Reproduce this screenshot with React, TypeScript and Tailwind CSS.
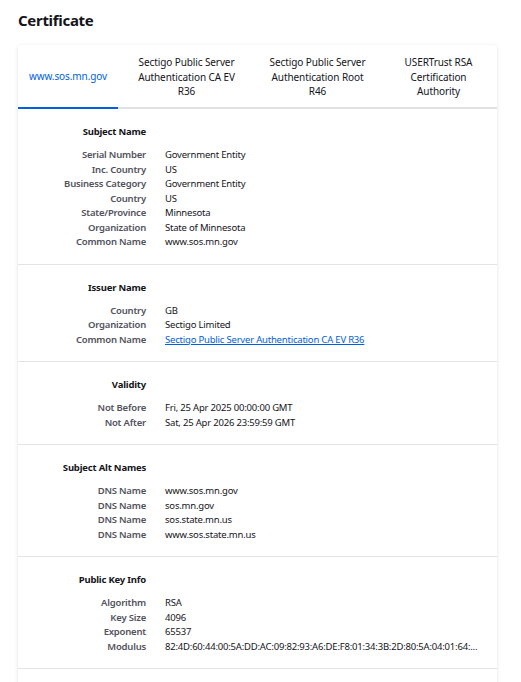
import React from 'react';

type Row = { label: string; value: string; link?: boolean };
type Section = { title: string; rows: Row[] };

const tabs = [
  { name: 'www.sos.mn.gov', width: 'w-[100px]' },
  { name: 'Sectigo Public Server Authentication CA EV R36', width: 'w-[137px]' },
  { name: 'Sectigo Public Server Authentication Root R46', width: 'w-[125px]' },
  { name: 'USERTrust RSA Certification Authority', width: 'flex-1' },
];

const sections: Section[] = [
  {
    title: 'Subject Name',
    rows: [
      { label: 'Serial Number', value: 'Government Entity' },
      { label: 'Inc. Country', value: 'US' },
      { label: 'Business Category', value: 'Government Entity' },
      { label: 'Country', value: 'US' },
      { label: 'State/Province', value: 'Minnesota' },
      { label: 'Organization', value: 'State of Minnesota' },
      { label: 'Common Name', value: 'www.sos.mn.gov' },
    ],
  },
  {
    title: 'Issuer Name',
    rows: [
      { label: 'Country', value: 'GB' },
      { label: 'Organization', value: 'Sectigo Limited' },
      { label: 'Common Name', value: 'Sectigo Public Server Authentication CA EV R36', link: true },
    ],
  },
  {
    title: 'Validity',
    rows: [
      { label: 'Not Before', value: 'Fri, 25 Apr 2025 00:00:00 GMT' },
      { label: 'Not After', value: 'Sat, 25 Apr 2026 23:59:59 GMT' },
    ],
  },
  {
    title: 'Subject Alt Names',
    rows: [
      { label: 'DNS Name', value: 'www.sos.mn.gov' },
      { label: 'DNS Name', value: 'sos.mn.gov' },
      { label: 'DNS Name', value: 'sos.state.mn.us' },
      { label: 'DNS Name', value: 'www.sos.state.mn.us' },
    ],
  },
  {
    title: 'Public Key Info',
    rows: [
      { label: 'Algorithm', value: 'RSA' },
      { label: 'Key Size', value: '4096' },
      { label: 'Exponent', value: '65537' },
      { label: 'Modulus', value: '82:4D:60:44:00:5A:DD:AC:09:82:93:A6:DE:F8:01:34:3B:2D:80:5A:04:01:64:...' },
    ],
  },
];

function CertSection({ section }: { section: Section }) {
  return (
    <div className="border-b border-[#e4e4e8] pt-[16px] pb-[14px]">
      <div className="flex">
        <div className="w-[128px] shrink-0 text-right text-[9.5px] leading-[14px] font-bold tracking-[-0.2px] text-[#15141a]">
          {section.title}
        </div>
      </div>
      <div className="mt-[9px] flex flex-col">
        {section.rows.map((row, i) => (
          <div key={i} className="flex text-[9.5px] leading-[14.5px] tracking-[-0.2px]">
            <div className="w-[128px] shrink-0 text-right font-semibold text-[#52525c]">{row.label}</div>
            <div className="ml-[19px] min-w-0 pr-[20px] whitespace-nowrap text-[#15141a]">
              {row.link ? (
                <a href="#" className="text-[#0060df] underline">
                  {row.value}
                </a>
              ) : (
                row.value
              )}
            </div>
          </div>
        ))}
      </div>
    </div>
  );
}

export default function App() {
  return (
    <div className="min-h-screen bg-white px-[18px] pt-[9px] font-['Noto_Sans',sans-serif] text-[#15141a]">
      <h1 className="text-[15px] leading-[22px] font-bold tracking-[-0.3px]">Certificate</h1>

      <div className="mt-[14px] w-[479px] rounded-[3px] bg-white shadow-[0_1px_4px_rgba(0,0,0,0.12)]">
        {/* Tabs */}
        <div className="flex border-b-2 border-[#e0e0e6]">
          {tabs.map((tab, i) => (
            <div
              key={tab.name}
              className={`${tab.width} -mb-[2px] flex h-[64px] items-center justify-center px-3 text-center text-[10px] leading-[14.5px] tracking-[-0.1px] ${
                i === 0 ? 'border-b-2 border-[#0061e0] text-[#0061e0]' : 'text-[#15141a]'
              }`}
            >
              {tab.name}
            </div>
          ))}
        </div>

        {sections.map((s) => (
          <CertSection key={s.title} section={s} />
        ))}
        <div className="h-[40px]" />
      </div>
    </div>
  );
}
